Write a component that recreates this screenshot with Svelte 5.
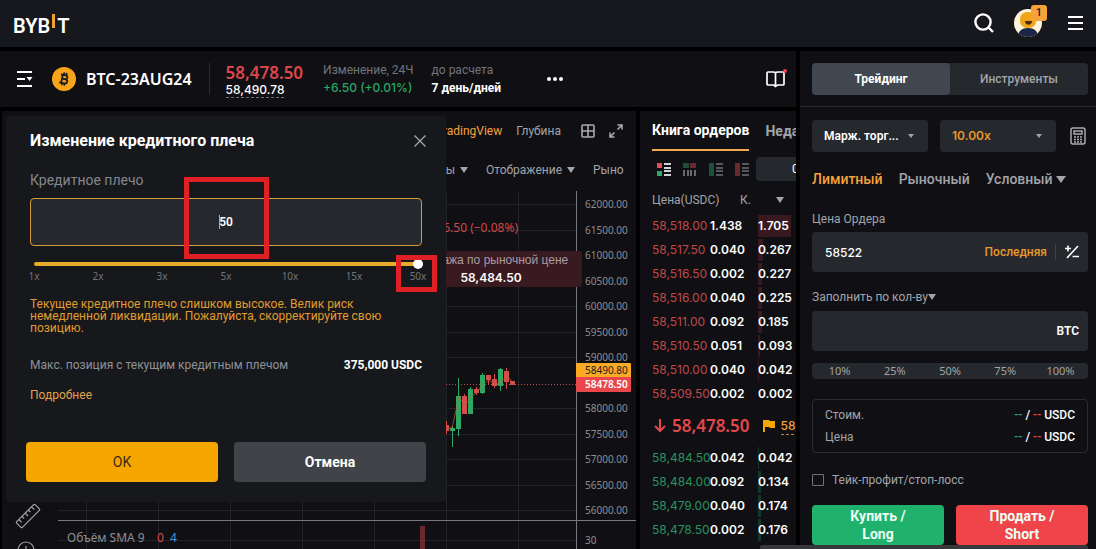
<script>
    // Account and contract
    let notifications = 1;
    let market = {
        symbol: 'BTC-23AUG24',
        last: '58,478.50',
        mark: '58,490.78',
        change: '+6.50 (+0.01%)',
        expiry: '7 день/дней'
    };

    // Order book, width is the depth bar in px
    let asks = [
        { price: '58,518.00', qty: '1.438', sum: '1.705', width: 33 },
        { price: '58,517.50', qty: '0.040', sum: '0.267', width: 5 },
        { price: '58,516.50', qty: '0.002', sum: '0.227', width: 4 },
        { price: '58,516.00', qty: '0.040', sum: '0.225', width: 4 },
        { price: '58,511.00', qty: '0.092', sum: '0.185', width: 4 },
        { price: '58,510.50', qty: '0.051', sum: '0.093', width: 2 },
        { price: '58,510.00', qty: '0.040', sum: '0.042', width: 1 },
        { price: '58,509.50', qty: '0.002', sum: '0.002', width: 0 }
    ];
    let bids = [
        { price: '58,484.50', qty: '0.042', sum: '0.042', width: 1 },
        { price: '58,484.00', qty: '0.092', sum: '0.134', width: 3 },
        { price: '58,479.00', qty: '0.040', sum: '0.174', width: 3 },
        { price: '58,478.50', qty: '0.002', sum: '0.176', width: 3 }
    ];

    // Chart: y = 204 is 62000, 51px per 1000
    const priceY = (price) => Math.round(204 + (62000 - price) * 0.051);
    let levels = [62000, 61500, 61000, 60500, 60000, 59500, 59000, 58000, 57500, 57000, 56500, 56000];
    let columns = [86, 158, 230, 302, 374, 446, 518];
    let candles = [
        { x: 444, top: 425, bottom: 431, high: 421, low: 434, up: false },
        { x: 450, top: 428, bottom: 431, high: 426, low: 447, up: true },
        { x: 456, top: 396, bottom: 429, high: 378, low: 436, up: true },
        { x: 462, top: 396, bottom: 414, high: 394, low: 414, up: false },
        { x: 468, top: 389, bottom: 414, high: 387, low: 414, up: true },
        { x: 474, top: 389, bottom: 393, high: 387, low: 395, up: false },
        { x: 480, top: 375, bottom: 393, high: 373, low: 394, up: true },
        { x: 486, top: 375, bottom: 380, high: 375, low: 384, up: false },
        { x: 492, top: 379, bottom: 386, high: 374, low: 388, up: false },
        { x: 498, top: 369, bottom: 386, high: 368, low: 391, up: true },
        { x: 504, top: 371, bottom: 382, high: 368, low: 389, up: false },
        { x: 510, top: 381, bottom: 385, high: 381, low: 385, up: false }
    ];

    // Leverage dialog
    let leverages = [1, 2, 3, 5, 10, 15, 50];
    let step = 6;
    let leverage = '50';
    let open = true;

    // Order form
    let orderPrice = '58522';
    let orderQty = '';
    let shares = ['10%', '25%', '50%', '75%', '100%'];
    let costs = ['Стоим.', 'Цена'];
    let takeProfit = false;
</script>

<div class="app">
    <header>
        <a class="logo" href="/" aria-label="BYBIT">BYB<i></i>T</a>
        <div class="account">
            <button aria-label="Поиск">
                <svg width="20" height="20" viewBox="0 0 20 20" fill="none" stroke="#fff" stroke-width="2.4">
                    <circle cx="9" cy="9" r="7.6" />
                    <path d="M14.5 14.5L19 19" />
                </svg>
            </button>
            <button class="avatar" aria-label="Профиль">
                <svg width="28" height="28" viewBox="0 0 28 28">
                    <clipPath id="face"><circle cx="14" cy="14" r="14" /></clipPath>
                    <g clip-path="url(#face)">
                        <rect width="28" height="28" fill="#fff3dc" />
                        <path d="M4 28C4 22 8 19 14 19s10 3 10 9z" fill="#1b2545" />
                        <rect x="6" y="3" width="16" height="16" rx="7" fill="#f0a519" />
                        <path d="M11 12h7c0 5-7 5-7 0z" fill="#4b2a10" />
                    </g>
                </svg>
                <span class="badge">{notifications}</span>
            </button>
            <button aria-label="Меню">
                <svg width="15" height="16" viewBox="0 0 15 16" fill="#fff">
                    <path d="M0 1h15v2H0zM0 7h15v2H0zM0 13h15v2H0z" />
                </svg>
            </button>
        </div>
    </header>

    <div class="layout">
        <section class="market">
            <svg width="17" height="16" viewBox="0 0 17 16">
                <path d="M1 1h15M1 8h8M1 15h15" stroke="#fff" stroke-width="2" />
                <path d="M10.5 6h6l-3 4z" fill="#fff" />
            </svg>
            <svg class="coin" width="24" height="24" viewBox="0 0 24 24">
                <circle cx="12" cy="12" r="12" fill="#f9a51a" />
                <g transform="rotate(12 12 12)" fill="none" stroke="#17181e" stroke-width="1.8">
                    <path d="M8 8h5a2 2 0 0 1 0 4H10h3.6a2 2 0 0 1 0 4.2H8M10 8v8M11 5.5v2.5M13.5 5.5v2.5M11 16v2.5M13.5 16v2.5" />
                </g>
            </svg>
            <h1>{market.symbol}</h1>
            <div class="prices">
                <strong>{market.last}</strong>
                <span>{market.mark}</span>
            </div>
            <div class="stat">
                <span>Изменение, 24Ч</span>
                <span class="up">{market.change}</span>
            </div>
            <div class="stat">
                <span>до расчета</span>
                <b>{market.expiry}</b>
            </div>
            <button class="more" aria-label="Ещё">
                <svg width="16" height="4" viewBox="0 0 16 4" fill="#fff">
                    <circle cx="2" cy="2" r="2" /><circle cx="8" cy="2" r="2" /><circle cx="14" cy="2" r="2" />
                </svg>
            </button>
            <button class="guide" aria-label="Руководство">
                <svg width="22" height="20" viewBox="0 0 22 20">
                    <path d="M2 4q0-1 1-1h5q2 0 2.5 1 .5-1 2.5-1h5q1 0 1 1v11q0 1-1 1h-5.500l-2 1.500-2-1.500H3q-1 0-1-1zM10.500 4v12.500" fill="none" stroke="#fff" stroke-width="1.7" />
                    <circle cx="20" cy="2" r="2" fill="#ef454a" />
                </svg>
            </button>
        </section>

        <section class="chart">
            <nav class="chart-tabs">
                <button class="on">TradingView</button>
                <button>Глубина</button>
                <svg width="14" height="14" viewBox="0 0 14 14" fill="none" stroke="#a8abb0" stroke-width="1.6">
                    <rect x="1" y="1" width="12" height="12" rx="1" /><path d="M7 1v12M1 7h12" />
                </svg>
                <svg width="14" height="14" viewBox="0 0 14 14" fill="none" stroke="#a8abb0" stroke-width="1.6">
                    <path d="M8.5 1H13v4.5M13 1L8.5 5.5M1 8.5V13h4.5M1 13l4.5-4.5" />
                </svg>
            </nav>
            <div class="tools">
                <button>Индикаторы <i class="caret"></i></button>
                <button>Отображение <i class="caret"></i></button>
                <button class="cut">Рыночная</button>
            </div>
            <svg class="plot" width="634" height="359" viewBox="2 190 634 359">
                <g stroke="#222327">
                    {#each levels as level}
                        <path d="M58 {priceY(level) + 0.5}H576" />
                    {/each}
                    {#each columns as x}
                        <path d="M{x}.5 191V549" />
                    {/each}
                    <path d="M58 540.5H576" />
                </g>
                <g>
                    {#each levels as level}
                        <text x="585" y={priceY(level) + 4}>{level}.00</text>
                    {/each}
                    <text x="585" y="544">30</text>
                </g>
                <path d="M576.5 191V549M58 520.5H636" stroke="#77797e" />
                <path d="M446 384.5H576" stroke="#b45450" stroke-dasharray="1 2" />
                {#each candles as candle}
                    <g fill={candle.up ? '#2fa866' : '#d84b4c'}>
                        <rect x={candle.x + 2} y={candle.high} width="1" height={candle.low - candle.high} />
                        <rect x={candle.x} y={candle.top} width="5" height={candle.bottom - candle.top} />
                    </g>
                {/each}
                <path d="M447 428h5l7-31 6 8 6-8 6-5 6-8 6-4 6 5 6-3 6-7 6 8" fill="none" stroke="#b8682c" stroke-width="0.7" />
                <rect x="420" y="526" width="5" height="23" fill="#6c282f" />
                <text class="delta" x="518" y="232">−46.50 (−0.08%)</text>
                <rect x="400" y="251" width="182" height="36" rx="3" fill="#381a20" />
                <text class="hint" x="491" y="264">Продажа по рыночной цене</text>
                <text class="hint value" x="491" y="282">58,484.50</text>
                <rect x="576" y="363" width="55" height="15" rx="1" fill="#fbaa23" />
                <rect x="576" y="377" width="55" height="15" rx="1" fill="#e9474b" />
                <text class="tag" x="585" y="374">58490.80</text>
                <text class="tag last" x="585" y="388">58478.50</text>
                <text class="study" x="67" y="542">Объём SMA 9</text>
                <text class="study" x="157" y="542" style:fill="#d84b4c">0</text>
                <text class="study" x="170" y="542" style:fill="#3b96dc">4</text>
                <g fill="none" stroke="#a2a4a9" stroke-width="1.2">
                    <g transform="translate(28 516) rotate(-45)">
                        <rect x="-13" y="-4" width="26" height="8" rx="1" />
                        <path d="M-9 -4v4M-4.5 -4v3M0 -4v4M4.5 -4v3M9 -4v4" />
                    </g>
                    <circle cx="26" cy="550" r="8" />
                    <path d="M26 546v8M22 550h8" />
                </g>
            </svg>
        </section>

        <section class="book">
            <nav class="book-tabs">
                <button class="on">Книга ордеров</button>
                <button>Недавние</button>
            </nav>
            <div class="views">
                <svg width="14" height="13" viewBox="0 0 14 13">
                    <path d="M0 0h5v5H0z" fill="#e05254" /><path d="M0 8h5v5H0z" fill="#30a86a" />
                    <path d="M7 0h7v2H7zM7 4h7v2H7zM7 7h7v2H7zM7 11h7v2H7z" fill="#d0d1d4" />
                </svg>
                <svg width="14" height="13" viewBox="0 0 14 13">
                    <path d="M0 0h6v5H0z" fill="#1d5038" /><path d="M7 0h6v5H7z" fill="#692a2f" />
                    <path d="M0 7h2v6H0zM4 7h2v6H4zM7 7h2v6H7zM11 7h2v6h-2z" fill="#67696d" />
                </svg>
                <svg width="14" height="13" viewBox="0 0 14 13">
                    <path d="M0 0h5v13H0z" fill="#1d5038" />
                    <path d="M7 0h7v2H7zM7 4h7v2H7zM7 7h7v2H7zM7 11h7v2H7z" fill="#55575c" />
                </svg>
                <svg width="14" height="13" viewBox="0 0 14 13">
                    <path d="M0 0h5v13H0z" fill="#692a2f" />
                    <path d="M7 0h7v2H7zM7 4h7v2H7zM7 7h7v2H7zM7 11h7v2H7z" fill="#55575c" />
                </svg>
                <select aria-label="Шаг цены"><option>0.5</option></select>
            </div>
            <table>
                <thead>
                    <tr><th>Цена(USDC)</th><th class="qty-head">К.</th><th class="sort"><i class="caret"></i></th></tr>
                </thead>
                <tbody class="asks">
                    {#each asks as row}
                        <tr>
                            <td>{row.price}</td>
                            <td>{row.qty}</td>
                            <td><i class="bar" style="width: {row.width}px"></i>{row.sum}</td>
                        </tr>
                    {/each}
                </tbody>
                <tbody>
                    <tr class="mid">
                        <td colspan="3">
                            <div>
                                <svg width="12" height="14" viewBox="0 0 12 14" fill="none" stroke="#e2474a" stroke-width="2">
                                    <path d="M6 0v12M1 7l5 5 5-5" />
                                </svg>
                                <strong>{market.last}</strong>
                                <svg width="12" height="12" viewBox="0 0 12 12" fill="#f7a600">
                                    <path d="M0 0h6l1 1h5v7H7L6 7H2v5H0z" />
                                </svg>
                                <span>{market.mark}</span>
                            </div>
                        </td>
                    </tr>
                </tbody>
                <tbody class="bids">
                    {#each bids as row}
                        <tr>
                            <td>{row.price}</td>
                            <td>{row.qty}</td>
                            <td><i class="bar" style="width: {row.width}px"></i>{row.sum}</td>
                        </tr>
                    {/each}
                </tbody>
            </table>
        </section>

        <aside>
            <div class="switch-wrap">
                <div class="switch">
                    <button class="on">Трейдинг</button>
                    <button>Инструменты</button>
                </div>
            </div>
            <form on:submit|preventDefault>
                <div class="modes">
                    <label class="select">
                        <select aria-label="Режим маржи"><option>Марж. торг...</option></select>
                        <i class="caret"></i>
                    </label>
                    <label class="select gold">
                        <select aria-label="Плечо"><option>10.00x</option></select>
                        <i class="caret"></i>
                    </label>
                    <svg width="16" height="18" viewBox="0 0 16 18" fill="none" stroke="#a8abb0" stroke-width="1.5">
                        <rect x="1" y="1" width="14" height="16" rx="2" />
                        <rect x="4" y="4" width="8" height="3" />
                        <path d="M4 10h2M7 10h2M10 10h2M4 12.5h2M7 12.5h2M10 12.5h2M4 15h2M7 15h2M10 15h2" />
                    </svg>
                </div>
                <div class="types">
                    <button type="button" class="on">Лимитный</button>
                    <button type="button">Рыночный</button>
                    <button type="button">Условный <i class="caret"></i></button>
                </div>
                <label class="caption" for="price">Цена Ордера</label>
                <div class="field">
                    <input id="price" bind:value={orderPrice} />
                    <button type="button" class="latest">Последняя</button>
                    <svg width="14" height="14" viewBox="0 0 14 14" fill="none" stroke="#fff" stroke-width="1.6">
                        <path d="M13 1L2 13M0 3.5h6M3 .5v6M7.5 11.5H14" />
                    </svg>
                </div>
                <label class="caption second" for="qty">Заполнить по кол-ву<i class="caret"></i></label>
                <div class="field">
                    <input id="qty" bind:value={orderQty} />
                    <b>BTC</b>
                </div>
                <div class="shares">
                    {#each shares as share}
                        <button type="button">{share}</button>
                    {/each}
                </div>
                <div class="costs">
                    {#each costs as cost}
                        <div>
                            <span>{cost}</span>
                            <b><i class="up">--</i> / <i class="down">--</i> USDC</b>
                        </div>
                    {/each}
                </div>
                <label class="check">
                    <input type="checkbox" bind:checked={takeProfit} />
                    Тейк-профит/стоп-лосс
                </label>
                <div class="submit">
                    <button class="buy">Купить /<br />Long</button>
                    <button class="sell">Продать /<br />Short</button>
                </div>
            </form>
        </aside>
    </div>
    <div class="scrollbar"></div>

    {#if open}
        <div class="modal" role="dialog" aria-labelledby="modal-title">
            <div class="title">
                <h2 id="modal-title">Изменение кредитного плеча</h2>
                <button aria-label="Закрыть" on:click={() => (open = false)}>
                    <svg width="12" height="12" viewBox="0 0 12 12" stroke="#a2a4a9" stroke-width="1.4">
                        <path d="M.5 .5l11 11M11.5 .5l-11 11" />
                    </svg>
                </button>
            </div>
            <label class="leverage-label" for="leverage">Кредитное плечо</label>
            <div class="leverage">
                <input id="leverage" bind:value={leverage} />
                <span class="cursor"></span>
                <span class="frame"></span>
            </div>
            <input class="slider" type="range" min="0" max="6" bind:value={step} aria-label="Плечо" on:input={() => (leverage = String(leverages[step]))} />
            <div class="ticks">
                {#each leverages as value}
                    <span>{value}x</span>
                {/each}
                <span class="frame"></span>
            </div>
            <p class="warning">Текущее кредитное плечо слишком высокое. Велик риск немедленной ликвидации. Пожалуйста, скорректируйте свою позицию.</p>
            <div class="limit">
                <span>Макс. позиция с текущим кредитным плечом</span>
                <b>375,000 USDC</b>
            </div>
            <a class="details" href="#details">Подробнее</a>
            <div class="actions">
                <button class="ok" on:click={() => (open = false)}>OK</button>
                <button class="cancel" on:click={() => (open = false)}>Отмена</button>
            </div>
        </div>
    {/if}
</div>

<style>
    :global(body) {
        background: #000;
    }

    .app {
        position: relative;
        display: flex;
        flex-direction: column;
        height: 100vh;
        overflow: hidden;
        gap: 4px;
        font-family: Roboto, "Noto Sans", sans-serif;
        font-size: 12px;
        line-height: 16px;
        color: #a2a4a9;
    }

    button, input, select {
        font: inherit;
        color: inherit;
        background: none;
        border: none;
        padding: 0;
        margin: 0;
        outline: none;
        box-sizing: border-box;
    }

    button {
        cursor: pointer;
        white-space: nowrap;
    }

    select {
        appearance: none;
    }

    svg {
        display: block;
        flex: none;
    }

    i {
        font-style: normal;
    }

    b, strong {
        font-weight: 600;
        color: #fff;
    }

    .up {
        color: #28a765;
    }

    .down {
        color: #e2474a;
    }

    .caret {
        display: inline-block;
        border: 4px solid transparent;
        border-top: 6px solid #a2a4a9;
        border-bottom: none;
        vertical-align: 1px;
    }

    header {
        display: flex;
        justify-content: space-between;
        align-items: center;
        height: 47px;
        flex: none;
        padding: 0 13px;
        background: #17181e;
    }

    .logo {
        display: flex;
        align-items: center;
        gap: 2px;
        padding-top: 4px;
        font-size: 20px;
        font-weight: 600;
        line-height: 24px;
        color: #fff;
        text-decoration: none;
    }

    .logo i {
        width: 3px;
        height: 14px;
        margin-bottom: 10px;
        background: #f0a030;
    }

    .account {
        display: flex;
        align-items: center;
        gap: 20px;
        padding-bottom: 2px;
    }

    .account button:last-child {
        margin-left: 6px;
    }

    .avatar {
        position: relative;
    }

    .badge {
        position: absolute;
        top: -4px;
        right: -5px;
        width: 16px;
        border-radius: 3px;
        background: #f7a13a;
        color: #17181e;
        font-size: 11px;
        font-weight: 500;
    }

    .layout {
        flex: 1;
        min-height: 0;
        display: grid;
        grid-template-columns: minmax(0, 1fr) 156px 296px;
        grid-template-rows: 56px minmax(0, 1fr);
        gap: 4px;
    }

    .market, .chart, .book, aside {
        background: #101014;
        overflow: hidden;
    }

    .market {
        grid-column: 1 / 3;
        display: flex;
        align-items: center;
        padding: 0 9px 0 16px;
        white-space: nowrap;
    }

    .coin {
        margin: 0 10px 0 19px;
    }

    h1 {
        margin: 0;
        padding-right: 17px;
        border-right: 1px solid #2c2d32;
        font-family: "Noto Sans", sans-serif;
        font-size: 16px;
        line-height: 32px;
        font-weight: 600;
        color: #fff;
    }

    .prices {
        display: flex;
        flex-direction: column;
        align-items: flex-start;
        padding: 2px 20px 0 16px;
    }

    .prices strong {
        font-family: "Noto Sans", sans-serif;
        font-size: 17px;
        line-height: 20px;
        color: #d9474c;
    }

    .prices span {
        font-family: Inter, sans-serif;
        font-weight: 500;
        line-height: 14px;
        color: #fff;
        border-bottom: 1px dashed #71757a;
    }

    .stat {
        display: flex;
        flex-direction: column;
        gap: 2px;
        margin-right: 18px;
        color: #71757a;
    }

    .stat .up {
        font-family: Inter, sans-serif;
        font-weight: 500;
    }

    .stat b {
        font-weight: 700;
    }

    .more {
        margin-left: 28px;
    }

    .guide {
        margin-left: auto;
    }

    .chart {
        display: flex;
        flex-direction: column;
        align-items: flex-end;
        margin-left: 2px;
    }

    .chart-tabs {
        display: flex;
        align-items: center;
        height: 39px;
        gap: 14px;
        padding-right: 13px;
    }

    .chart-tabs svg:first-of-type {
        margin-left: 6px;
    }

    .chart-tabs .on {
        color: #f7a13a;
    }

    .tools {
        display: flex;
        align-items: center;
        height: 40px;
        gap: 18px;
        padding-right: 12px;
    }

    .tools .caret {
        margin-left: 2px;
    }

    .cut {
        width: 31px;
        overflow: hidden;
        text-align: left;
    }

    .plot text {
        font-family: "Noto Sans", sans-serif;
        font-size: 10px;
        fill: #8b8d92;
    }

    .plot .delta {
        font-size: 12px;
        fill: #d0484b;
        text-anchor: end;
    }

    .plot .hint {
        font-family: "Liberation Sans", sans-serif;
        font-size: 12px;
        fill: #a99ba0;
        text-anchor: middle;
    }

    .plot .value {
        font-family: Inter, sans-serif;
        font-weight: 600;
        fill: #fff;
    }

    .plot .tag {
        fill: #17181e;
    }

    .plot .last {
        font-weight: 600;
        fill: #fff;
    }

    .plot .study {
        font-size: 12px;
    }

    .book-tabs {
        display: flex;
        gap: 16px;
        padding-left: 12px;
        font-size: 14px;
        font-weight: 700;
        line-height: 38px;
    }

    .book-tabs .on {
        color: #fff;
        border-bottom: 2px solid #efa84b;
    }

    .views {
        display: flex;
        align-items: center;
        gap: 12px;
        padding: 6px 0 0 17px;
    }

    .views select {
        flex: none;
        width: 80px;
        height: 24px;
        margin-left: -5px;
        padding-left: 36px;
        border-radius: 4px;
        background: #25282c;
        color: #fff;
    }

    table {
        width: 138px;
        margin: 5px 0 0 12px;
        border-collapse: collapse;
        table-layout: fixed;
    }

    th, td {
        box-sizing: border-box;
        height: 24px;
        padding: 0;
        text-align: left;
        white-space: nowrap;
        font-weight: 400;
    }

    th:first-child {
        width: 58px;
    }

    th:nth-child(2) {
        width: 32px;
    }

    .qty-head {
        padding-left: 30px;
    }

    .sort {
        text-align: right;
    }

    .sort .caret {
        margin-right: 6px;
    }

    th {
        height: 28px;
    }

    td {
        color: #fff;
        font-family: Inter, sans-serif;
        font-weight: 600;
    }

    td:nth-child(2) {
        text-align: right;
    }

    td:nth-child(3) {
        position: relative;
        padding-left: 16px;
        z-index: 0;
    }

    .asks td:first-child {
        color: #c0484c;
        font-weight: 400;
    }

    .bids td:first-child {
        color: #2a935f;
        font-weight: 400;
    }

    .bar {
        position: absolute;
        z-index: -1;
        top: 1px;
        left: 16px;
        height: 22px;
        background: #38191f;
    }

    .bids .bar {
        background: #12382a;
    }

    .mid td {
        height: 40px;
    }

    .mid div {
        display: flex;
        align-items: center;
        padding-left: 2px;
        gap: 6px;
    }

    .mid strong {
        font-family: "Noto Sans", sans-serif;
        font-size: 17px;
        color: #e2474a;
        margin-right: 7px;
    }

    .mid span {
        color: #f7a13a;
        font-weight: 500;
        border-bottom: 1px dashed #c48332;
    }

    aside {
        grid-column: 3;
        grid-row: 1 / 3;
    }

    .switch-wrap {
        padding: 12px 8px 11px 12px;
        border-bottom: 1px solid #25282c;
    }

    .switch {
        display: flex;
        border-radius: 4px;
        background: #25282c;
    }

    .switch button {
        flex: 1;
        height: 32px;
        border-radius: 4px;
        font-weight: 500;
    }

    .switch .on {
        background: #404751;
        color: #fff;
        font-weight: 700;
    }

    form {
        padding: 13px 8px 0 12px;
    }

    .modes {
        display: flex;
        align-items: center;
        gap: 12px;
    }

    .modes svg {
        margin: 0 2px;
    }

    .select {
        position: relative;
        flex: 1;
        min-width: 0;
    }

    .select select {
        display: block;
        width: 100%;
        height: 32px;
        padding: 0 12px;
        border-radius: 4px;
        background: #25282c;
        color: #fff;
        font-weight: 600;
    }

    .select.gold select {
        color: #e8982c;
        font-family: Inter, sans-serif;
    }

    .select .caret {
        position: absolute;
        top: 14px;
        right: 14px;
        border-width: 3px;
        border-top-width: 4px;
        border-bottom: none;
        pointer-events: none;
    }

    .types {
        display: flex;
        gap: 16px;
        margin-top: 16px;
        font-size: 14px;
        font-weight: 500;
        line-height: 22px;
    }

    .types .on {
        color: #f7a13a;
    }

    .types .caret {
        border-width: 5px;
        border-top-width: 7px;
        border-bottom: none;
    }

    .caption {
        display: block;
        margin: 21px 0 5px;
    }

    .second {
        margin: 17px 0 6px;
    }

    .field {
        display: flex;
        align-items: center;
        height: 40px;
        padding: 0 9px 0 13px;
        border-radius: 4px;
        background: #25282c;
        color: #fff;
    }

    .field input {
        flex: 1;
        min-width: 0;
        height: 40px;
        font-family: Inter, sans-serif;
        font-weight: 500;
    }

    .latest {
        margin-right: 9px;
        padding-right: 8px;
        border-right: 1px solid #404347;
        color: #e8982c;
        font-weight: 500;
    }

    .shares {
        display: flex;
        margin-top: 12px;
        border-radius: 4px;
        background: #25282c;
        font-family: "Noto Sans", sans-serif;
        font-size: 11px;
    }

    .shares button {
        flex: 1;
    }

    .costs {
        margin-top: 20px;
        padding: 4px 12px;
        border: 1px solid #2c2d32;
        border-radius: 4px;
        line-height: 22px;
    }

    .costs div {
        display: flex;
        justify-content: space-between;
    }

    .costs b {
        font-weight: 500;
    }

    .check {
        display: flex;
        align-items: center;
        gap: 8px;
        margin-top: 19px;
    }

    .check input {
        appearance: none;
        width: 12px;
        height: 12px;
        border: 1px solid #71757a;
        border-radius: 1px;
    }

    .submit {
        display: flex;
        gap: 12px;
        margin-top: 17px;
    }

    .submit button {
        flex: 1;
        height: 40px;
        border-radius: 4px;
        font-size: 14px;
        font-weight: 700;
        line-height: 18px;
        color: #ecfff5;
    }

    .submit .buy {
        background: #20b26c;
    }

    .submit .sell {
        background: #ef454a;
    }

    .scrollbar {
        position: absolute;
        right: 8px;
        bottom: 0;
        width: 328px;
        height: 4px;
        border-radius: 2px 2px 0 0;
        background: #38383b;
    }

    .modal {
        position: absolute;
        top: 116px;
        left: 6px;
        width: 440px;
        box-sizing: border-box;
        padding: 16px 16px 20px;
        border-radius: 4px;
        background: #17181c;
    }

    .title {
        display: flex;
        justify-content: space-between;
        align-items: center;
        padding: 0 20px 0 8px;
        margin-right: -16px;
    }

    h2 {
        margin: 0;
        font-size: 16px;
        font-weight: 700;
        line-height: 18px;
        color: #fff;
    }

    .leverage-label {
        display: block;
        margin: 20px 8px 8px;
        font-size: 14px;
        line-height: 20px;
        color: #85878c;
    }

    .leverage {
        position: relative;
        margin: 0 8px;
    }

    .leverage input {
        width: 100%;
        height: 48px;
        border: 1px solid #d69a3c;
        border-radius: 4px;
        background: #25282c;
        color: #fff;
        font-weight: 600;
        text-align: center;
    }

    .cursor {
        position: absolute;
        top: 17px;
        left: calc(50% - 7px);
        width: 1px;
        height: 14px;
        background: #f7a13a;
    }

    .frame {
        position: absolute;
        box-sizing: border-box;
        border: 5px solid #e12026;
        pointer-events: none;
    }

    .leverage .frame {
        top: -21px;
        left: calc(50% - 42px);
        width: 85px;
        height: 82px;
    }

    .slider {
        appearance: none;
        display: block;
        width: calc(100% - 19px);
        height: 4px;
        margin: 16px 7px 4px 12px;
        border-radius: 2px;
        background: #e8ac2c;
    }

    .slider::-webkit-slider-thumb {
        appearance: none;
        width: 10px;
        height: 10px;
        border-radius: 50%;
        background: #fff;
    }

    .ticks {
        position: relative;
        display: flex;
        justify-content: space-between;
        font-family: "Noto Sans", sans-serif;
        font-size: 10px;
        line-height: 13px;
        color: #71757a;
    }

    .ticks span {
        width: 24px;
        text-align: center;
    }

    .ticks .frame {
        top: -15px;
        right: -7px;
        width: 41px;
        height: 37px;
    }

    .warning {
        margin: 15px 8px 0;
        line-height: 12px;
        color: #e09c2c;
    }

    .limit {
        display: flex;
        justify-content: space-between;
        margin: 23px 8px 14px;
        color: #8f9196;
    }

    .limit b {
        font-weight: 700;
    }

    .details {
        margin: 0 8px;
        color: #e0a24a;
        text-decoration: none;
    }

    .actions {
        display: flex;
        gap: 16px;
        margin: 39px 4px 0;
    }

    .actions button {
        flex: 1;
        height: 40px;
        border-radius: 4px;
        font-size: 14px;
    }

    .actions .ok {
        background: #f7a600;
        color: #3a2a14;
    }

    .actions .cancel {
        background: #404347;
        color: #fff;
        font-weight: 700;
    }
</style>
